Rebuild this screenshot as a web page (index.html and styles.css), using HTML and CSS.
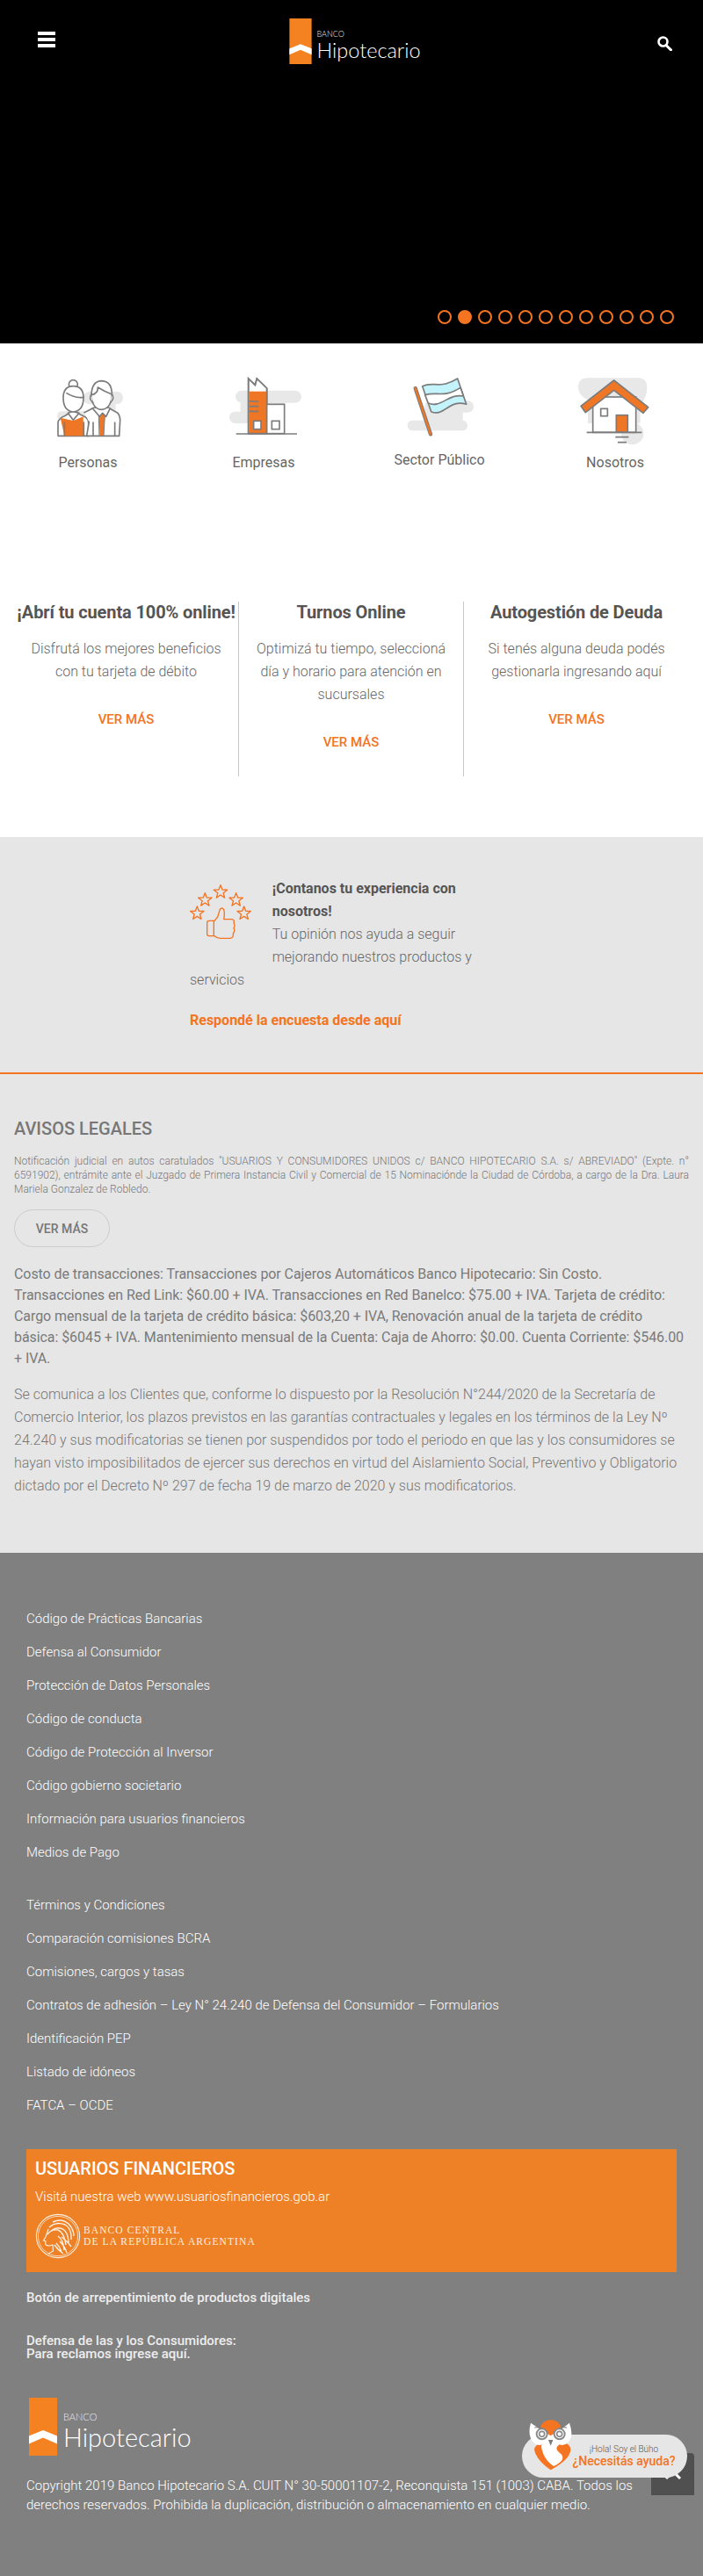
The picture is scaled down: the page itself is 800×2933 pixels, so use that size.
FILE: index.html
```
<!DOCTYPE html>
<html lang="es">
<head>
<meta charset="utf-8">
<title>Banco Hipotecario</title>
<link rel="stylesheet" href="styles.css">
</head>
<body>
<svg class="defs" width="0" height="0" aria-hidden="true">
  <defs>
    <polygon id="star" points="0,-24 6,-8 23,-7.4 9.5,3.1 14.1,19.4 0,10 -14.1,19.4 -9.5,3.1 -23,-7.4 -6,-8"/>
    <g id="logomark">
      <rect width="32" height="66" fill="#f58220"/>
      <polygon points="0,43.5 16,37 32,43.5 32,52.5 16,45.5 0,52.5" fill="#fff"/>
    </g>
  </defs>
</svg>

<section class="hero">
  <header class="topbar">
    <div class="burger"><span></span><span></span><span></span></div>
    <a class="logo logo-sm">
      <svg class="logo-mark" viewBox="0 0 32 66"><use href="#logomark"/></svg>
      <span class="logo-text"><span class="logo-banco">BANCO</span><span class="logo-name">Hipotecario</span></span>
    </a>
    <svg class="search" viewBox="0 0 17 17" width="17" height="17"><circle cx="6.5" cy="6.5" r="5" fill="none" stroke="#fff" stroke-width="2.6"/><line x1="10" y1="10.5" x2="15.5" y2="15.8" stroke="#fff" stroke-width="3" stroke-linecap="round"/></svg>
  </header>
  <div class="dots">
    <span class="dot"></span><span class="dot dot-on"></span><span class="dot"></span><span class="dot"></span><span class="dot"></span><span class="dot"></span><span class="dot"></span><span class="dot"></span><span class="dot"></span><span class="dot"></span><span class="dot"></span><span class="dot"></span>
  </div>
</section>

<section class="white">
  <nav class="nav">
    <a class="nav-item">
      <svg class="nav-icon" viewBox="60 50 240 250" width="80" height="83.33">
        <g fill="#e8e8e8"><rect x="165" y="106" width="135" height="44" rx="22"/><rect x="75" y="174" width="110" height="30" rx="15"/><rect x="205" y="130" width="70" height="70"/></g>
        <g stroke="#7c7c7c" stroke-width="5" stroke-linejoin="round" stroke-linecap="round">
          <path d="M78 258 V212 Q80 198 100 190 L114 182 H148 L165 190 Q182 198 182 212 V258 Z" fill="#fff"/>
          <path d="M86 196 L130 206 L164 192 L166 258 H100 Z" fill="#ee7624" stroke="none"/>
          <path d="M112 180 L130 204 L150 180 L130 174 Z" fill="#fff"/>
          <path d="M100 212 V258 M166 212 V258" fill="none"/>
          <path d="M168 178 L200 162 H250 L282 180 Q290 188 290 205 L287 258 H176 L184 210" fill="#fff"/>
          <path d="M218 188 L230 182 L238 188 L234 258 H220 Z" fill="#ee7624" stroke-width="3"/>
          <path d="M196 164 L220 192 L230 180 L242 192 L256 164" fill="#fff"/>
          <path d="M198 258 V212 M272 258 V212" fill="none"/>
          <circle cx="130" cy="82" r="15" fill="#fff"/>
          <path d="M96 128 Q96 88 130 88 Q165 88 165 128 Q165 172 130 176 Q96 172 96 128 Z" fill="#fff"/>
          <path d="M108 112 Q135 130 165 126" fill="none"/>
          <path d="M192 122 Q192 70 228 70 Q264 72 262 122 Q258 166 226 168 Q196 166 192 122 Z" fill="#fff"/>
          <path d="M192 118 Q215 114 214 92 Q240 108 262 116" fill="none"/>
          <path d="M192 116 Q182 130 197 144 M262 116 Q272 130 257 144" fill="#fff"/>
        </g>
      </svg>
      <span class="nav-label">Personas</span>
    </a>
    <a class="nav-item">
      <svg class="nav-icon" viewBox="650 50 260 250" width="86.67" height="83.33">
        <g fill="#e8e8e8"><rect x="683" y="103" width="225" height="42" rx="21"/><rect x="662" y="175" width="90" height="40" rx="20"/><rect x="700" y="130" width="150" height="80"/></g>
        <g stroke="#7c7c7c" stroke-width="5" stroke-linejoin="miter">
          <path d="M727 62 L750 84 L756 62 L790 95 V250 H727 Z" fill="#fff"/>
          <path d="M730 106 H788 V249 H730 Z" fill="#ee7624" stroke="none"/>
          <path d="M727 62 L750 84 L756 62 L790 95 V250 H727 Z" fill="none"/>
          <path d="M730 140 H762 M730 157 H762 M730 174 H762" fill="none"/>
          <rect x="745" y="207" width="25" height="28" fill="#fff"/>
          <rect x="790" y="150" width="60" height="100" fill="#fff"/>
          <rect x="807" y="207" width="26" height="28" fill="#fff"/>
          <path d="M685 251 H893" fill="none"/>
        </g>
      </svg>
      <span class="nav-label">Empresas</span>
    </a>
    <a class="nav-item">
      <svg class="nav-icon" viewBox="90 50 240 250" width="80" height="83.33">
        <g fill="#e8e8e8"><rect x="101" y="205" width="205" height="35" rx="17"/><rect x="160" y="138" width="167" height="40" rx="20"/><rect x="160" y="160" width="130" height="60"/></g>
        <line x1="128" y1="95" x2="180" y2="252" stroke="#7c7c7c" stroke-width="13" stroke-linecap="round"/>
        <line x1="128" y1="95" x2="180" y2="252" stroke="#ee7624" stroke-width="7" stroke-linecap="round"/>
        <path d="M152 88 C190 70 210 100 272 62 L302 150 C245 130 225 195 182 175 Z" fill="#c3f3fb" stroke="#7c7c7c" stroke-width="5" stroke-linejoin="round"/>
        <path d="M161 118 C200 105 225 130 282 93 L292 122 C240 112 215 165 172 146 Z" fill="#fff" stroke="#7c7c7c" stroke-width="5" stroke-linejoin="round"/>
      </svg>
      <span class="nav-label nav-label-up">Sector Público</span>
    </a>
    <a class="nav-item">
      <svg class="nav-icon" viewBox="680 50 260 250" width="86.67" height="83.33">
        <g fill="#e8e8e8"><path d="M716 60 H885 Q918 60 918 92 Q918 130 895 150 V215 H716 V135 Q683 120 683 92 Q683 60 716 60 Z"/><circle cx="868" cy="250" r="38"/></g>
        <g stroke="#7c7c7c" stroke-width="5">
          <rect x="733" y="125" width="147" height="121" fill="#fff"/>
          <rect x="760" y="165" width="23" height="25" fill="#fff"/>
          <rect x="813" y="187" width="39" height="58" fill="#ee7624"/>
          <path d="M692 156 L805 68 L922 160 L905 180 L805 102 L708 178 Z" fill="#ee7624" stroke-linejoin="round"/>
          <path d="M712 246 H900 M810 262 H855 M818 280 H848" fill="none"/>
        </g>
      </svg>
      <span class="nav-label">Nosotros</span>
    </a>
  </nav>

  <div class="cards">
    <article class="card">
      <h2 class="card-title">¡Abrí tu cuenta 100% online!</h2>
      <p class="card-text">Disfrutá los mejores beneficios con tu tarjeta de débito</p>
      <a class="card-link">VER MÁS</a>
    </article>
    <article class="card">
      <h2 class="card-title">Turnos Online</h2>
      <p class="card-text">Optimizá tu tiempo, seleccioná día y horario para atención en sucursales</p>
      <a class="card-link">VER MÁS</a>
    </article>
    <article class="card">
      <h2 class="card-title">Autogestión de Deuda</h2>
      <p class="card-text">Si tenés alguna deuda podés gestionarla ingresando aquí</p>
      <a class="card-link">VER MÁS</a>
    </article>
  </div>
</section>

<section class="gray">
  <div class="survey">
    <svg class="survey-icon" viewBox="105 135 215 200" width="71.67" height="66.67">
      <g fill="none" stroke="#f47421" stroke-width="4" stroke-linejoin="round">
        <use href="#star" x="133" y="240"/><use href="#star" x="160" y="194"/><use href="#star" x="213" y="167"/><use href="#star" x="266" y="194"/><use href="#star" x="293" y="240"/>
        <path d="M190 265 H173 Q167 265 167 272 V310 Q167 317 173 317 H190 V265 Z"/>
        <path d="M190 268 L203 252 L211 226 Q217 218 224 226 Q228 242 224 260 H252 Q262 262 258 273 Q264 282 258 290 Q264 300 256 308 Q258 324 246 325 H212 Q200 325 190 316"/>
      </g>
    </svg>
    <p class="survey-text"><strong>¡Contanos tu experiencia con nosotros!</strong><br>Tu opinión nos ayuda a seguir mejorando nuestros productos y servicios</p>
    <a class="survey-link">Respondé la encuesta desde aquí</a>
  </div>
  <hr class="rule">
  <div class="legal">
    <h2 class="legal-title">AVISOS LEGALES</h2>
    <p class="legal-small">Notificación judicial en autos caratulados "USUARIOS Y CONSUMIDORES UNIDOS c/ BANCO HIPOTECARIO S.A. s/ ABREVIADO" (Expte. n° 6591902), entrámite ante el Juzgado de Primera Instancia Civil y Comercial de 15 Nominaciónde la Ciudad de Córdoba, a cargo de la Dra. Laura Mariela Gonzalez de Robledo.</p>
    <a class="pill">VER MÁS</a>
    <p class="legal-costs">Costo de transacciones: Transacciones por Cajeros Automáticos Banco Hipotecario: Sin Costo. Transacciones en Red Link: $60.00 + IVA. Transacciones en Red Banelco: $75.00 + IVA. Tarjeta de crédito: Cargo mensual de la tarjeta de crédito básica: $603,20 + IVA, Renovación anual de la tarjeta de crédito básica: $6045 + IVA. Mantenimiento mensual de la Cuenta: Caja de Ahorro: $0.00. Cuenta Corriente: $546.00 + IVA.</p>
    <p class="legal-notice">Se comunica a los Clientes que, conforme lo dispuesto por la Resolución N°244/2020 de la Secretaría de Comercio Interior, los plazos previstos en las garantías contractuales y legales en los términos de la Ley Nº 24.240 y sus modificatorias se tienen por suspendidos por todo el periodo en que las y los consumidores se hayan visto imposibilitados de ejercer sus derechos en virtud del Aislamiento Social, Preventivo y Obligatorio dictado por el Decreto Nº 297 de fecha 19 de marzo de 2020 y sus modificatorios.</p>
  </div>
</section>

<footer class="footer">
  <ul class="links">
    <li>Código de Prácticas Bancarias</li>
    <li>Defensa al Consumidor</li>
    <li>Protección de Datos Personales</li>
    <li>Código de conducta</li>
    <li>Código de Protección al Inversor</li>
    <li>Código gobierno societario</li>
    <li>Información para usuarios financieros</li>
    <li>Medios de Pago</li>
  </ul>
  <ul class="links links-2">
    <li>Términos y Condiciones</li>
    <li>Comparación comisiones BCRA</li>
    <li>Comisiones, cargos y tasas</li>
    <li>Contratos de adhesión – Ley N° 24.240 de Defensa del Consumidor – Formularios</li>
    <li>Identificación PEP</li>
    <li>Listado de idóneos</li>
    <li>FATCA – OCDE</li>
  </ul>
  <div class="fin">
    <h3 class="fin-title">USUARIOS FINANCIEROS</h3>
    <p class="fin-text">Visitá nuestra web www.usuariosfinancieros.gob.ar</p>
    <div class="bcra">
      <svg class="bcra-seal" viewBox="0 0 52 52" width="52" height="52">
        <g fill="none" stroke="#fdeedd">
          <circle cx="26" cy="26" r="24.6" stroke-width="1.1"/>
          <circle cx="26" cy="26" r="22.6" stroke-width=".8"/>
          <path d="M20 10 Q30 5 38 12 Q44 18 44 26 M16 16 Q24 9 34 13 Q42 18 41 30 M18 20 Q26 14 33 19 Q38 24 38 34 M14 24 Q18 18 26 19 Q33 22 35 36 M26 26 Q32 30 33 42 M30 27 Q37 32 41 38 M28 32 Q34 38 36 45" stroke-width="1.4"/>
          <path d="M15 18 Q13 24 12 27 L9.500 31 L12 32 L11.500 35 Q12.500 37 16 37 L20 36 L20.500 43 L15 46" stroke-width="1.2"/>
          <path d="M22 36 Q26 42 32 46 M24 34 Q28 38 30 44" stroke-width="1.4"/>
        </g>
      </svg>
      <div class="bcra-text"><span>BANCO CENTRAL</span><span>DE LA REPÚBLICA ARGENTINA</span></div>
    </div>
  </div>
  <p class="foot-line">Botón de arrepentimiento de productos digitales</p>
  <p class="foot-def">Defensa de las y los Consumidores:<br>Para reclamos ingrese aquí.</p>
  <a class="logo logo-lg">
    <svg class="logo-mark" viewBox="0 0 32 66"><use href="#logomark"/></svg>
    <span class="logo-text"><span class="logo-banco">BANCO</span><span class="logo-name">Hipotecario</span></span>
  </a>
  <p class="copyright">Copyright 2019 Banco Hipotecario S.A. CUIT N° 30-50001107-2, Reconquista 151 (1003) CABA. Todos los derechos reservados. Prohibida la duplicación, distribución o almacenamiento en cualquier medio.</p>
</footer>

<a class="totop"><svg viewBox="0 0 24 14" width="24" height="14"><path d="M4 12 L12 4 L20 12" fill="none" stroke="#fff" stroke-width="3"/></svg></a>
<aside class="buho">
  <svg class="owl" viewBox="60 70 160 180" width="53.33" height="60">
    <circle cx="140" cy="112" r="38" fill="#f47421"/>
    <path d="M140 245 L152 238 Q208 205 208 175 Q205 150 175 152 L110 150 Q85 160 84 175 Q90 210 140 245 Z" fill="#f47421"/>
    <path d="M72 84 Q95 100 140 128 Q185 100 204 84 Q220 130 200 150 Q185 165 170 158 Q148 170 175 190 Q195 210 150 232 Q125 215 115 190 Q105 165 110 158 Q95 165 80 150 Q60 125 72 84 Z" fill="#fff"/>
    <path d="M85 100 Q110 95 130 115 M195 100 Q170 95 150 115" fill="none" stroke="#777" stroke-width="3"/>
    <circle cx="110" cy="122" r="18" fill="#fff" stroke="#8a8a8a" stroke-width="6"/>
    <circle cx="110" cy="122" r="9" fill="#fff" stroke="#8a8a8a" stroke-width="5"/>
    <circle cx="170" cy="122" r="18" fill="#fff" stroke="#8a8a8a" stroke-width="6"/>
    <circle cx="170" cy="122" r="9" fill="#fff" stroke="#8a8a8a" stroke-width="5"/>
    <polygon points="132,142 148,142 140,162" fill="#7c7c7c"/>
  </svg>
  <span class="buho-hi">¡Hola! Soy el Búho</span>
  <span class="buho-help">¿Necesitás ayuda?</span>
</aside>
</body>
</html>
```

FILE: styles.css
```
* { box-sizing: border-box; }
html, body { margin: 0; padding: 0; }
body {
  position: relative;
  width: 800px;
  height: 2933px;
  overflow: hidden;
  font-family: Roboto, "Liberation Sans", sans-serif;
  font-size: 16px;
  color: #666;
  background: #fff;
}
.defs { position: absolute; }
p, h2, h3, ul { margin: 0; padding: 0; }

/* hero */
.hero {
  height: 391px;
  background: #000;
  display: flex;
  flex-direction: column;
  justify-content: space-between;
}
.topbar {
  display: grid;
  grid-template-columns: 1fr auto 1fr;
  padding: 21px 35px 0 43px;
}
.burger { display: flex; flex-direction: column; gap: 3.6px; width: 20px; margin-top: 15px; }
.burger span { display: block; height: 3.6px; background: #fff; }
.search { justify-self: end; margin-top: 19.500px; }
.logo { display: flex; align-items: flex-start; color: #fff; }
.logo-text { display: flex; flex-direction: column; font-family: Lato, sans-serif; font-weight: 300; }
.logo-banco { color: #e8e8e8; }
.logo-sm .logo-mark { width: 26px; height: 52px; margin-right: 5px; }
.logo-sm .logo-text { padding-top: 12px; }
.logo-sm .logo-banco { font-size: 9px; line-height: 11px; }
.logo-sm .logo-name { font-size: 23.500px; line-height: 26px; }
.logo-lg { margin-top: 42px; }
.logo-lg .logo-mark { width: 32px; height: 66px; margin: 0 7px 0 3px; }
.logo-lg .logo-text { padding-top: 15px; }
.logo-lg .logo-banco { font-size: 11px; line-height: 13px; }
.logo-lg .logo-name { font-size: 29px; line-height: 34px; }
.dots { display: flex; justify-content: flex-end; gap: 7px; padding: 0 33px 22px 0; }
.dot { width: 16px; height: 16px; border: 2px solid #f47421; border-radius: 50%; }
.dot-on { background: #f47421; }

/* nav and cards */
.white { height: 562px; padding-top: 36px; }
.nav { display: grid; grid-template-columns: repeat(4, 1fr); height: 258px; }
.nav-item { display: flex; flex-direction: column; align-items: center; }
.nav-icon { display: block; flex: none; }
.nav-label { margin-top: 5px; line-height: 24px; color: #666; }
.nav-label-up { margin-top: 2px; }
.cards { display: grid; grid-template-columns: repeat(3, 256px); padding: 0 16px; }
.card { height: 199px; text-align: center; border-right: 1px solid #c8c8c8; }
.card:last-child { border-right: 0; }
.card-title { font-size: 20px; font-weight: 700; line-height: 24px; color: #555; letter-spacing: -.12px; white-space: nowrap; }
.card-text { margin: 17px auto 0; max-width: 232px; font-weight: 300; line-height: 26px; color: #666; }
.card-link { display: block; margin-top: 29px; font-size: 15px; font-weight: 500; line-height: 24px; color: #f47421; }

/* gray */
.gray { height: 815px; background: #e6e6e6; padding-top: 46px; }
.survey { width: 368px; margin: 0 auto; }
.survey-icon { float: left; margin: 6px 23px 20px -1px; }
.survey-text { font-weight: 300; line-height: 26px; color: #666; }
.survey-text strong { font-weight: 700; color: #555; }
.survey-link { display: block; margin-top: 21px; font-weight: 700; line-height: 24px; color: #f47421; }
.rule { height: 2px; margin: 47px 0 0; border: 0; background: #f47421; }
.legal { padding: 47px 16px 0; }
.legal-title { font-size: 20px; font-weight: 500; line-height: 30px; color: #777; }
.legal-small { margin-top: 14px; font-size: 12px; font-weight: 300; line-height: 16px; color: #777; text-align: justify; }
.pill {
  display: flex;
  align-items: center;
  justify-content: center;
  width: 109px;
  height: 43px;
  margin-top: 15px;
  border: 1px solid #ccc;
  border-radius: 22px;
  font-size: 14px;
  font-weight: 500;
  color: #777;
}
.legal-costs { margin-top: 19px; line-height: 24px; color: #7a7a7a; letter-spacing: -.07px; }
.legal-notice { margin-top: 16px; font-weight: 300; line-height: 26px; color: #777; }

/* footer */
.footer { height: 1165px; background: #808080; padding: 56px 30px 0; color: #fff; }
.links { list-style: none; }
.links li { height: 38px; font-size: 15px; font-weight: 300; line-height: 38px; }
.links-2 { margin-top: 22px; }
.fin { height: 140px; margin-top: 31px; padding: 7px 10px 0; background: #ee8025; }
.fin-title { font-size: 20px; font-weight: 500; line-height: 30px; }
.fin-text { margin-top: 5px; font-size: 15px; font-weight: 300; line-height: 24px; }
.bcra { display: flex; align-items: center; gap: 3px; margin-top: 7px; }
.bcra-text { display: flex; flex-direction: column; font-family: "Liberation Serif", serif; font-size: 11.500px; line-height: 13px; letter-spacing: 1.1px; color: #fdeedd; }
.foot-line { margin-top: 17px; font-size: 15px; font-weight: 500; line-height: 24px; color: #eee; }
.foot-def { margin-top: 30px; font-size: 15px; font-weight: 500; line-height: 15px; color: #eee; }
.copyright { margin-top: 23px; font-size: 15px; font-weight: 300; line-height: 22px; }

/* floating */
.totop {
  position: absolute;
  left: 741px;
  top: 2793px;
  width: 49px;
  height: 48px;
  background: #505050;
  border-top-right-radius: 4px;
  display: flex;
  justify-content: center;
  padding-top: 17px;
}
.buho {
  position: absolute;
  left: 594px;
  top: 2772px;
  width: 188px;
  height: 49px;
  background: #e6e6e6;
  border-radius: 25px;
  padding: 10px 0 0 44px;
  display: flex;
  flex-direction: column;
  align-items: center;
}
.owl { position: absolute; left: 6px; top: -18px; }
.buho-hi { font-size: 10px; font-weight: 300; line-height: 13px; color: #555; }
.buho-help { font-size: 14px; font-weight: 500; line-height: 15px; color: #f47421; white-space: nowrap; }
```
